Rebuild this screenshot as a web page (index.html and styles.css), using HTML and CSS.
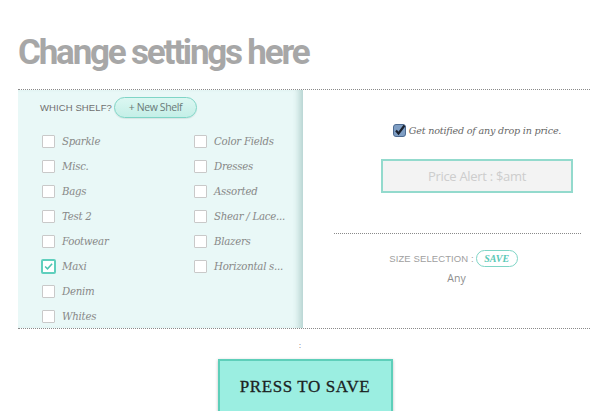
FILE: index.html
```html
<!DOCTYPE html>
<html>
<head>
<meta charset="utf-8">
<link rel="stylesheet" href="styles.css">
</head>
<body>
<div class="page">
  <h1 class="title">Change settings here</h1>
  <div class="settings">
    <div class="shelves">
      <div class="shelf-head">
        <span class="label-caps">WHICH SHELF?</span>
        <span class="pill-new">+ New Shelf</span>
      </div>
      <div class="shelf-grid">
        <div class="col">
          <div class="item"><span class="box"></span><span class="name">Sparkle</span></div>
          <div class="item"><span class="box"></span><span class="name">Misc.</span></div>
          <div class="item"><span class="box"></span><span class="name">Bags</span></div>
          <div class="item"><span class="box"></span><span class="name">Test 2</span></div>
          <div class="item"><span class="box"></span><span class="name">Footwear</span></div>
          <div class="item"><span class="box checked"><svg width="13" height="13" viewBox="0 0 13 13"><path d="M2.5 6.5 L5.3 9.3 L10.8 3.2" fill="none" stroke="#4cc4b0" stroke-width="1.8"/></svg></span><span class="name">Maxi</span></div>
          <div class="item"><span class="box"></span><span class="name">Denim</span></div>
          <div class="item"><span class="box"></span><span class="name">Whites</span></div>
        </div>
        <div class="col">
          <div class="item"><span class="box"></span><span class="name">Color Fields</span></div>
          <div class="item"><span class="box"></span><span class="name">Dresses</span></div>
          <div class="item"><span class="box"></span><span class="name">Assorted</span></div>
          <div class="item"><span class="box"></span><span class="name">Shear / Lace...</span></div>
          <div class="item"><span class="box"></span><span class="name">Blazers</span></div>
          <div class="item"><span class="box"></span><span class="name">Horizontal s...</span></div>
        </div>
      </div>
    </div>
    <div class="options">
      <div class="notify">
        <svg class="notify-box" width="13" height="13" viewBox="0 0 13 13"><rect x="0.5" y="0.5" width="12" height="12" rx="2.5" fill="#7f9ec4" stroke="#4d6a90"/><path d="M3 6.5 L5.5 9.5 L11.5 1.5" fill="none" stroke="#1b2230" stroke-width="2.2"/></svg>
        <span class="notify-text">Get notified of any drop in price.</span>
      </div>
      <div class="price-input">Price Alert : $amt</div>
      <div class="divider"></div>
      <div class="size-row">
        <span class="label-caps size-label">SIZE SELECTION :</span>
        <span class="pill-save">SAVE</span>
      </div>
      <div class="size-value">Any</div>
    </div>
  </div>
  <div class="colon">:</div>
  <div class="actions">
    <button class="save-btn">PRESS TO SAVE</button>
  </div>
</div>
</body>
</html>
```
FILE: styles.css
```css
html, body {
  margin: 0;
  padding: 0;
  background: #fff;
  overflow: hidden;
}
.page {
  width: 611px;
  height: 411px;
  padding-left: 18px;
  box-sizing: border-box;
}
.title {
  margin: 0;
  padding-top: 33px;
  height: 89px;
  box-sizing: border-box;
  font-family: Roboto, sans-serif;
  font-weight: 700;
  font-size: 35px;
  line-height: 40px;
  letter-spacing: -2.2px;
  color: #a7a7a7;
}
.settings {
  width: 572px;
  display: flex;
  border-top: 1px dotted #8a8a8a;
  border-bottom: 1px dotted #8a8a8a;
  height: 240px;
  box-sizing: border-box;
}
.shelves {
  width: 285px;
  flex-shrink: 0;
  background: #e9f8f7;
  box-shadow: inset -8px 0 6px -4px rgba(110,160,155,0.4);
  padding: 6px 0 0 22px;
  box-sizing: border-box;
}
.shelf-head {
  display: flex;
  align-items: center;
  height: 22px;
}
.label-caps {
  font-family: "Liberation Sans", Arial, sans-serif;
  font-size: 9.5px;
  color: #6f6f6f;
  letter-spacing: 0.1px;
}
.pill-new {
  margin-left: 2px;
  height: 21px;
  width: 83px;
  box-sizing: border-box;
  border: 1px solid #7fd5c6;
  border-radius: 11px;
  background: linear-gradient(#dcf7f2, #c4efe7);
  font-family: "Open Sans", sans-serif;
  font-size: 10.5px;
  letter-spacing: -0.4px;
  color: #6a7a78;
  display: flex;
  align-items: center;
  justify-content: center;
  box-shadow: 0 1px 1px rgba(0,0,0,0.08);
}
.shelf-grid {
  display: flex;
  margin-top: 11px;
  padding-left: 2px;
}
.col {
  width: 152px;
  flex-shrink: 0;
  display: flex;
  flex-direction: column;
}
.item {
  height: 25px;
  display: flex;
  align-items: center;
}
.box {
  width: 13px;
  height: 13px;
  box-sizing: border-box;
  border: 1px solid #c9c9c9;
  background: #fff;
  border-radius: 1px;
  display: flex;
  align-items: center;
  justify-content: center;
}
.box.checked {
  width: 15px;
  height: 15px;
  margin-left: -1px;
  border: 2px solid #5fcfbd;
  border-radius: 2px;
}
.box.checked + .name { margin-left: 6px; }
.box.checked svg { width: 11px; height: 11px; }
.name {
  margin-left: 7px;
  font-family: "DejaVu Serif", Georgia, serif;
  font-style: italic;
  font-size: 10.2px;
  color: #888;
  letter-spacing: -0.25px;
}
.options {
  flex: 1;
  display: flex;
  flex-direction: column;
  align-items: center;
}
.notify {
  margin-top: 34px;
  margin-left: 61px;
  display: flex;
  align-items: center;
}
.notify-box { margin-right: 3px; }
.notify-text {
  font-family: "DejaVu Serif", Georgia, serif;
  font-style: italic;
  font-size: 9.6px;
  color: #666;
  letter-spacing: -0.2px;
}
.price-input {
  margin-top: 22px;
  margin-left: 61px;
  width: 192px;
  height: 34px;
  box-sizing: border-box;
  border: 2px solid #93dacd;
  background: #f3f3f3;
  font-family: "Open Sans", sans-serif;
  font-size: 13px;
  letter-spacing: -0.3px;
  color: #cdcdcd;
  display: flex;
  align-items: center;
  justify-content: center;
}
.divider {
  margin-top: 40px;
  margin-left: 21px;
  width: 247px;
  border-top: 1px dotted #8a8a8a;
}
.size-row {
  margin-top: 16px;
  margin-left: 14px;
  display: flex;
  align-items: center;
}
.size-label { color: #a0a0a0; }
.pill-save {
  margin-left: 2px;
  height: 17px;
  width: 42px;
  box-sizing: border-box;
  border: 1px solid #7fd5c6;
  border-radius: 9px;
  font-family: "Liberation Serif", serif;
  font-style: italic;
  font-weight: 700;
  font-size: 10px;
  color: #5ac8b6;
  display: flex;
  align-items: center;
  justify-content: center;
}
.size-value {
  margin-top: 4px;
  margin-left: 20px;
  font-family: "Open Sans", sans-serif;
  font-size: 10.5px;
  color: #8d8d8d;
}
.colon {
  width: 564px;
  text-align: center;
  font-family: "Liberation Sans", sans-serif;
  font-size: 7px;
  color: #444;
  margin-top: 12px;
  height: 10px;
  line-height: 10px;
}
.actions {
  width: 572px;
  display: flex;
  justify-content: center;
  margin-top: 8px;
  padding-left: 2px;
  box-sizing: border-box;
}
.save-btn {
  width: 175px;
  height: 60px;
  background: #9beee1;
  border: 2px solid #5ecfba;
  box-shadow: 0 1px 3px rgba(0,0,0,0.25);
  font-family: "Liberation Serif", serif;
  font-size: 17px;
  letter-spacing: 0.6px;
  color: #1c2222;
  -webkit-text-stroke: 0.3px #1c2222;
  padding: 0 0 5px 0;
  cursor: pointer;
}
```
